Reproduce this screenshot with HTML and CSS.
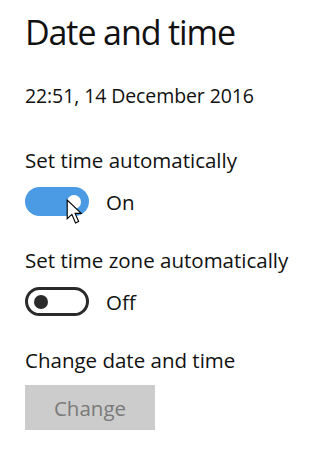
FILE: index.html
```html
<!DOCTYPE html>
<html lang="en">
<head>
<meta charset="utf-8">
<title>Date and time</title>
<link rel="stylesheet" href="styles.css">
</head>
<body>
<main class="page">
  <h1 class="title">Date and time</h1>
  <p class="now">22:51, 14 December 2016</p>

  <section class="setting setting-first">
    <div class="label">Set time automatically</div>
    <div class="toggle-row">
      <span class="toggle toggle-on"><span class="knob"></span>
        <svg class="cursor" width="18" height="26" viewBox="0 0 17 25" aria-hidden="true">
          <path d="M1 1 L1 19 L5.5 14.8 L9 23 L12 21.7 L8.6 13.8 L14.5 13.8 Z" fill="#fff" stroke="#000" stroke-width="1.1" stroke-linejoin="miter"/>
        </svg>
      </span>
      <span class="state">On</span>
    </div>
  </section>

  <section class="setting">
    <div class="label">Set time zone automatically</div>
    <div class="toggle-row">
      <span class="toggle toggle-off"><span class="knob"></span></span>
      <span class="state">Off</span>
    </div>
  </section>

  <section class="setting">
    <div class="label">Change date and time</div>
    <button class="btn" type="button" disabled>Change</button>
  </section>
</main>
</body>
</html>
```

FILE: styles.css
```css
html, body {
  margin: 0;
  padding: 0;
  background: #ffffff;
}

.page {
  padding-left: 25px;
  font-family: "Open Sans", "Noto Sans", "Liberation Sans", sans-serif;
  color: #111;
}

.title {
  margin: 10px 0 0;
  font-size: 34px;
  font-weight: 400;
  line-height: 44px;
  letter-spacing: -1.1px;
}

.now {
  margin: 28px 0 0;
  font-size: 19.5px;
  line-height: 28px;
  letter-spacing: -0.1px;
}

.setting {
  margin-top: 30px;
}

.setting-first {
  margin-top: 36px;
}

.label {
  font-size: 20.5px;
  line-height: 28px;
}

.toggle-row {
  display: flex;
  align-items: center;
  gap: 17px;
  margin-top: 13px;
}

.toggle {
  position: relative;
  box-sizing: border-box;
  width: 64px;
  height: 29px;
  border-radius: 15px;
  display: flex;
  align-items: center;
}

.toggle-on {
  background: #4a9be3;
  justify-content: flex-end;
  padding-right: 8px;
}

.toggle-on .knob {
  width: 14px;
  height: 14px;
  border-radius: 50%;
  background: #ffffff;
}

.toggle-off {
  border: 3px solid #2a2a2a;
  padding-left: 6px;
}

.toggle-off .knob {
  width: 14px;
  height: 14px;
  border-radius: 50%;
  background: #2a2a2a;
}

.cursor {
  position: absolute;
  left: 41px;
  top: 12px;
}

.state {
  font-size: 20.5px;
  line-height: 28px;
}

.btn {
  display: block;
  margin-top: 11px;
  width: 130px;
  height: 45px;
  border: none;
  background: #cccccc;
  color: #7a7a7a;
  font-family: inherit;
  font-size: 20.5px;
  line-height: 28px;
  padding: 0;
}
```
